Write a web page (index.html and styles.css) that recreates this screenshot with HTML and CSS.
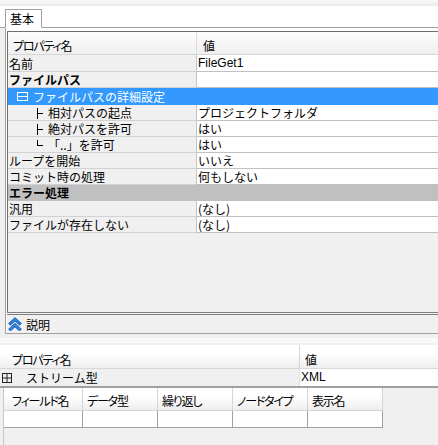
FILE: index.html
```html
<!DOCTYPE html>
<html lang="ja">
<head>
<meta charset="utf-8">
<link rel="stylesheet" href="styles.css">
</head>
<body>
<div class="topstrip"></div>
<div class="tabbar"><div class="tab">基本</div></div>
<div class="panel">
  <div class="pgrid">
    <div class="phead">
      <div class="hn">プロパティ名</div>
      <div class="hv">値</div>
    </div>
    <div class="row tall"><div class="cn">名前</div><div class="cv en">FileGet1</div></div>
    <div class="row"><div class="cn b">ファイルパス</div><div class="cv"></div></div>
    <div class="row tall sel">
      <div class="cn"><svg class="minus" width="11" height="9" viewBox="0 0 11 9"><rect x="0.5" y="0.5" width="10" height="8" fill="none" stroke="#fff"/><line x1="0" y1="4.5" x2="11" y2="4.5" stroke="#fff"/></svg>ファイルパスの詳細設定</div>
      <div class="cv"></div>
    </div>
    <div class="row">
      <div class="cn"><svg class="tree" width="12" height="15" viewBox="0 0 12 15"><line x1="1.5" y1="3" x2="1.5" y2="14" stroke="#000"/><line x1="1" y1="8.5" x2="7" y2="8.5" stroke="#000"/></svg>相対パスの起点</div>
      <div class="cv">プロジェクトフォルダ</div>
    </div>
    <div class="row">
      <div class="cn"><svg class="tree" width="12" height="15" viewBox="0 0 12 15"><line x1="1.5" y1="3" x2="1.5" y2="14" stroke="#000"/><line x1="1" y1="8.5" x2="7" y2="8.5" stroke="#000"/></svg>絶対パスを許可</div>
      <div class="cv">はい</div>
    </div>
    <div class="row">
      <div class="cn"><svg class="tree" width="12" height="15" viewBox="0 0 12 15"><line x1="1.5" y1="3" x2="1.5" y2="9" stroke="#000"/><line x1="1" y1="8.5" x2="7" y2="8.5" stroke="#000"/></svg>「..」を許可</div>
      <div class="cv">はい</div>
    </div>
    <div class="row"><div class="cn">ループを開始</div><div class="cv">いいえ</div></div>
    <div class="row"><div class="cn">コミット時の処理</div><div class="cv">何もしない</div></div>
    <div class="row grp"><div class="cn b">エラー処理</div><div class="cv"></div></div>
    <div class="row"><div class="cn">汎用</div><div class="cv">(なし)</div></div>
    <div class="row"><div class="cn">ファイルが存在しない</div><div class="cv">(なし)</div></div>
  </div>
  <div class="help">
    <svg class="chev" width="14" height="14" viewBox="0 0 14 14">
      <path d="M0.5 6.5 L7 0.5 L13.5 6.5 L11.5 8.3 L7 4.2 L2.5 8.3 Z" fill="#2f7fdc" stroke="#1b5fb8" stroke-width="0.8"/>
      <path d="M0.5 12.2 L7 6.2 L13.5 12.2 L11.5 14 L7 9.9 L2.5 14 Z" fill="#2f7fdc" stroke="#1b5fb8" stroke-width="0.8"/>
    </svg>
    <span>説明</span>
  </div>
</div>
<div class="lower">
  <div class="lstrip"></div>
  <div class="lhead">
    <div class="hn">プロパティ名</div>
    <div class="hv">値</div>
  </div>
  <div class="lrow">
    <div class="cn"><svg class="plus" width="10" height="10" viewBox="0 0 10 10"><rect x="0.5" y="0.5" width="9" height="9" fill="none" stroke="#222"/><line x1="0" y1="5" x2="10" y2="5" stroke="#222"/><line x1="5" y1="0" x2="5" y2="10" stroke="#222"/></svg>ストリーム型</div>
    <div class="cv en">XML</div>
  </div>
  <div class="sub">
    <div class="shead">
      <div class="sc first">フィールド名</div>
      <div class="sc">データ型</div>
      <div class="sc">繰り返し</div>
      <div class="sc">ノードタイプ</div>
      <div class="sc">表示名</div>
    </div>
    <div class="srow">
      <div class="sd first"></div>
      <div class="sd"></div>
      <div class="sd"></div>
      <div class="sd"></div>
      <div class="sd"></div>
    </div>
  </div>
</div>
</body>
</html>
```
FILE: styles.css
```css
* { box-sizing: border-box; }
html, body { margin: 0; padding: 0; }
body {
  width: 438px;
  height: 445px;
  overflow: hidden;
  background: #f0f0f0;
  font-family: "Noto Sans CJK JP", "Noto Sans", sans-serif;
  font-size: 12px;
  line-height: 15px;
  color: #000;
}
.en { font-family: "Liberation Sans", Arial, sans-serif; }
.b { font-weight: bold; }

.topstrip { height: 6px; background: linear-gradient(#f9f9f9, #ebebeb); }
.tabbar {
  height: 22px;
  background: #fff;
  border-bottom: 1px solid #a0a0a0;
  display: flex;
  align-items: flex-end;
  padding-left: 5px;
}
.tab {
  height: 19px;
  margin-bottom: -1px;
  border: 1px solid #a0a0a0;
  border-bottom-color: #fff;
  background: #fff;
  padding: 2px 7px 0 4px;
  line-height: 14px;
}

.panel {
  margin-left: 5px;
  height: 306px;
  border-left: 1px solid #a0a0a0;
  border-bottom: 1px solid #a0a0a0;
  background: #fff;
  padding: 3px 0 0 1px;
  display: flex;
  flex-direction: column;
}
.pgrid {
  height: 281px;
  border-top: 1px solid #6d6d6d;
  border-left: 1px solid #6d6d6d;
  background: #f0f0f0;
}
.phead {
  display: flex;
  height: 23px;
  border-bottom: 1px solid #d6d6d6;
  background: linear-gradient(#fdfdfd, #efefef);
}
.phead .hn {
  width: 189px;
  padding: 6px 0 0 5px;
  border-right: 1px solid #dcdcdc;
}
.phead .hv { flex: 1; padding: 6px 0 0 6px; }
.hn, .sc { font-feature-settings: "palt"; letter-spacing: -1.2px; }

.row { display: flex; height: 16px; white-space: nowrap; }
.row.tall { height: 17px; }
.cn {
  width: 189px;
  display: flex;
  align-items: center;
  padding-left: 1px;
  background: #f0f0f0;
  border-right: 1px solid #c4c4c4;
  border-bottom: 1px solid #d2d2d2;
}
.cv {
  flex: 1;
  padding-left: 1px;
  background: #fff;
  border-bottom: 1px solid #c0c0c0;
  display: flex;
  align-items: center;
}
.sel .cn, .sel .cv { background: #3399ff; color: #fff; border-color: #3399ff; }
.grp .cn, .grp .cv { background: #c0c0c0; border-color: #c0c0c0; }
.minus { margin: 0 5px 0 8px; flex: none; }
.tree { margin: 0 0 0 27px; flex: none; }

.help {
  flex: 1;
  border-top: 3px double #808080;
  background: #f0f0f0;
  display: flex;
  align-items: center;
  padding-left: 1px;
}
.chev { flex: none; margin-right: 4px; }

.lower { margin-top: 4px; }
.lstrip { height: 5px; background: #f9f9f9; margin-bottom: 2px; }
.lhead {
  display: flex;
  height: 24px;
  background: linear-gradient(#ffffff 35%, #eeeeee);
  border-bottom: 1px solid #d8d8d8;
}
.lhead .hn {
  width: 300px;
  padding: 7px 0 0 12px;
  border-right: 1px solid #d4d4d4;
}
.lhead .hv { flex: 1; padding: 7px 0 0 5px; }
.lrow { display: flex; height: 19px; border-bottom: 2px solid #a0a0a0; white-space: nowrap; }
.lrow .cn { width: 300px; padding-left: 2px; border-bottom: none; border-right: 1px solid #e0e0e0; }
.lrow .cv { border-bottom: none; padding-left: 1px; }
.plus { flex: none; margin-right: 14px; }

.sub { margin-left: 3px; border-left: 1px solid #c8c8c8; height: 60px; }
.shead { display: flex; }
.sc {
  width: 75px;
  height: 23px;
  padding: 5px 0 0 4px;
  background: linear-gradient(#ffffff 35%, #eeeeee);
  border-right: 1px solid #d5d5d5;
  border-bottom: 1px solid #d5d5d5;
}
.sc.first { width: 79px; padding-left: 8px; }
.srow { display: flex; }
.sd {
  width: 75px;
  height: 17px;
  background: #fff;
  border-right: 1px solid #a0a0a0;
  border-bottom: 1px solid #a0a0a0;
}
.sd.first { width: 79px; }
```
